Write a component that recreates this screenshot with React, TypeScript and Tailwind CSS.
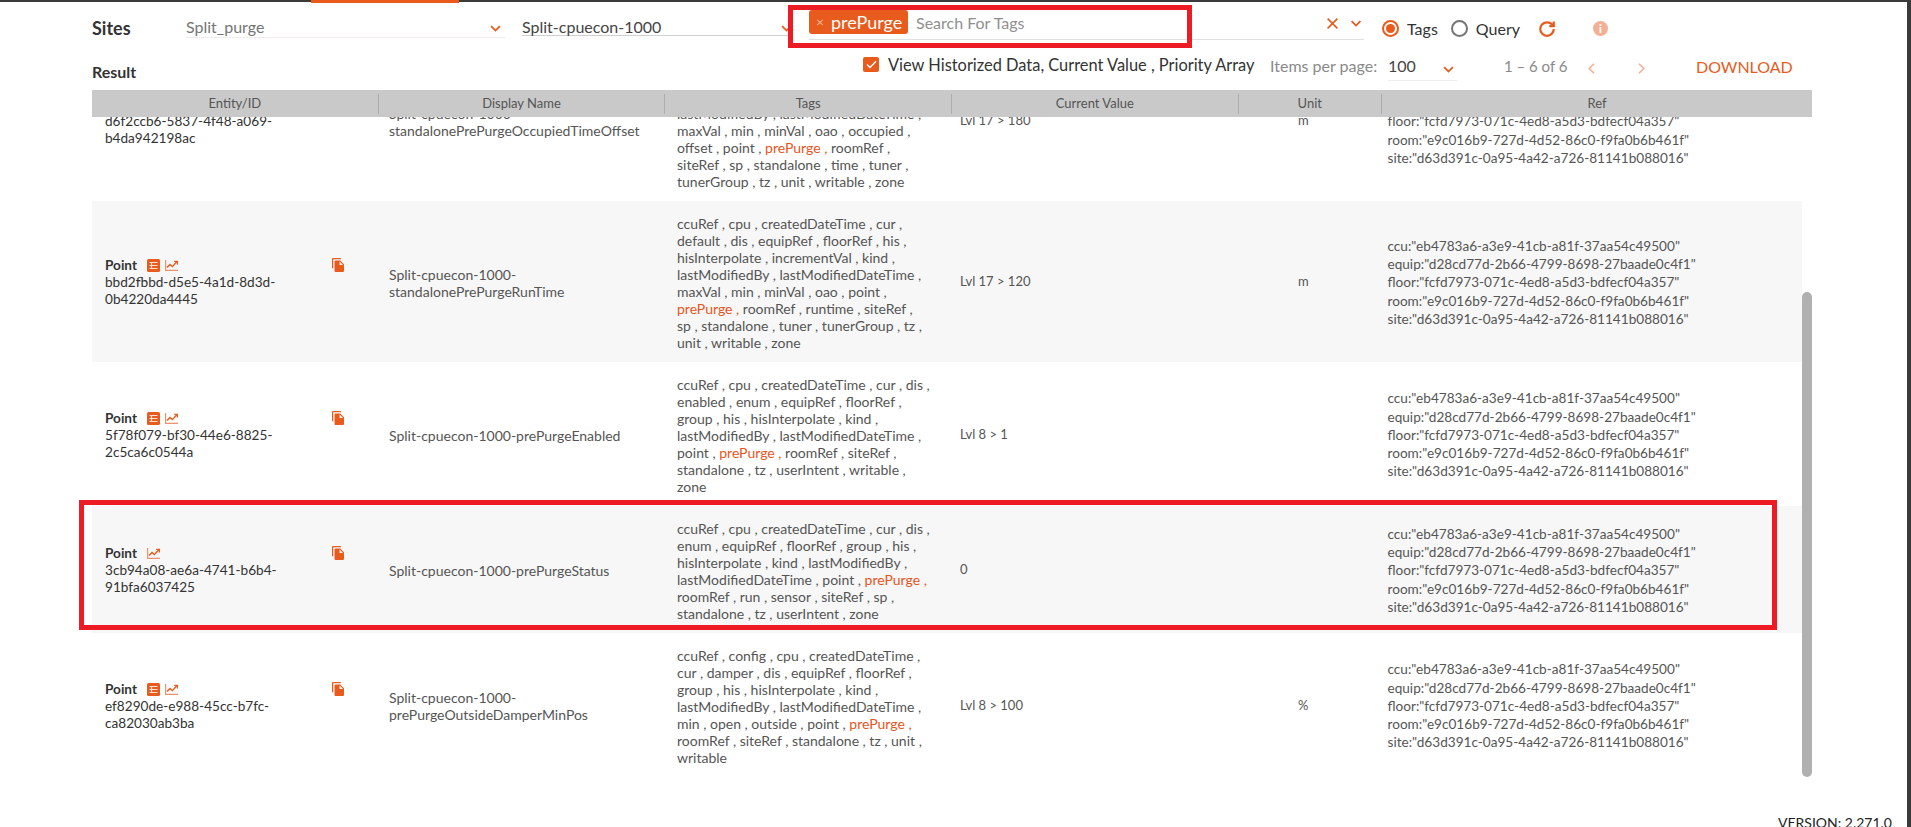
import { ReactNode } from 'react'

const ORANGE = 'text-[#e85b1c]'

function Chevron({ className }: { className: string }) {
  return (
    <svg viewBox="0 0 12 8" className={className} fill="none" stroke="currentColor" strokeWidth="2">
      <path d="M1 1.2 6 6.4 11 1.2" />
    </svg>
  )
}

function TableIcon() {
  return (
    <svg viewBox="0 0 13 13" className="w-[13px] h-[13px] shrink-0">
      <rect width="13" height="13" rx="1.5" fill="#e85b1c" />
      <path d="M2.5 3.5h8M2.5 6.5h8M2.5 9.5h8M4.5 3v7" stroke="#fde3d6" strokeWidth="1.2" />
    </svg>
  )
}

function ChartIcon() {
  return (
    <svg viewBox="0 0 13 11" className="w-[13px] h-[11px] shrink-0" fill="none">
      <path d="M.6 0v10.4H13" stroke="#f0906a" strokeWidth="1.2" />
      <path d="M2 7.6 5 4.4l2.4 2.2L11.6 2" stroke="#e85b1c" strokeWidth="1.4" />
      <path d="M9.2 1.4h3.2v3.2" stroke="#e85b1c" strokeWidth="1.2" />
    </svg>
  )
}

function CopyIcon() {
  return (
    <svg viewBox="2 1 19 22" className="w-[12px] h-[14px]" fill="#e85b1c">
      <path d="M16 1H4c-1.1 0-2 .9-2 2v14h2V3h12V1zm-1 4l6 6v10c0 1.1-.9 2-2 2H7.99C6.89 23 6 22.1 6 21l.01-14c0-1.1.89-2 1.99-2h7zm-1 7h5.5L14 6.5V12z" />
    </svg>
  )
}

function TagLine({ text }: { text: string }) {
  const parts = text.split('prePurge ,')
  if (parts.length === 1) return <div>{text}</div>
  return (
    <div>
      {parts[0]}
      <span className="text-[#e8541c]">prePurge ,</span>
      {parts[1]}
    </div>
  )
}

const refs = [
  'ccu:"eb4783a6-a3e9-41cb-a81f-37aa54c49500"',
  'equip:"d28cd77d-2b66-4799-8698-27baade0c4f1"',
  'floor:"fcfd7973-071c-4ed8-a5d3-bdfecf04a357"',
  'room:"e9c016b9-727d-4d52-86c0-f9fa0b6b461f"',
  'site:"d63d391c-0a95-4a42-a726-81141b088016"',
]

interface Row {
  table: boolean
  id: string[]
  name: string[]
  tags: string[]
  value: string
  unit: string
}

const rows: Row[] = [
  {
    table: true,
    id: ['d6f2ccb6-5837-4f48-a069-', 'b4da942198ac'],
    name: ['Split-cpuecon-1000-', 'standalonePrePurgeOccupiedTimeOffset'],
    tags: [
      'ccuRef , cpu , createdDateTime , cur ,',
      'default , dis , equipRef , floorRef , his ,',
      'hisInterpolate , incrementVal , kind ,',
      'lastModifiedBy , lastModifiedDateTime ,',
      'maxVal , min , minVal , oao , occupied ,',
      'offset , point , prePurge , roomRef ,',
      'siteRef , sp , standalone , time , tuner ,',
      'tunerGroup , tz , unit , writable , zone',
    ],
    value: 'Lvl 17 > 180',
    unit: 'm',
  },
  {
    table: true,
    id: ['bbd2fbbd-d5e5-4a1d-8d3d-', '0b4220da4445'],
    name: ['Split-cpuecon-1000-', 'standalonePrePurgeRunTime'],
    tags: [
      'ccuRef , cpu , createdDateTime , cur ,',
      'default , dis , equipRef , floorRef , his ,',
      'hisInterpolate , incrementVal , kind ,',
      'lastModifiedBy , lastModifiedDateTime ,',
      'maxVal , min , minVal , oao , point ,',
      'prePurge , roomRef , runtime , siteRef ,',
      'sp , standalone , tuner , tunerGroup , tz ,',
      'unit , writable , zone',
    ],
    value: 'Lvl 17 > 120',
    unit: 'm',
  },
  {
    table: true,
    id: ['5f78f079-bf30-44e6-8825-', '2c5ca6c0544a'],
    name: ['Split-cpuecon-1000-prePurgeEnabled'],
    tags: [
      'ccuRef , cpu , createdDateTime , cur , dis ,',
      'enabled , enum , equipRef , floorRef ,',
      'group , his , hisInterpolate , kind ,',
      'lastModifiedBy , lastModifiedDateTime ,',
      'point , prePurge , roomRef , siteRef ,',
      'standalone , tz , userIntent , writable ,',
      'zone',
    ],
    value: 'Lvl 8 > 1',
    unit: '',
  },
  {
    table: false,
    id: ['3cb94a08-ae6a-4741-b6b4-', '91bfa6037425'],
    name: ['Split-cpuecon-1000-prePurgeStatus'],
    tags: [
      'ccuRef , cpu , createdDateTime , cur , dis ,',
      'enum , equipRef , floorRef , group , his ,',
      'hisInterpolate , kind , lastModifiedBy ,',
      'lastModifiedDateTime , point , prePurge ,',
      'roomRef , run , sensor , siteRef , sp ,',
      'standalone , tz , userIntent , zone',
    ],
    value: '0',
    unit: '',
  },
  {
    table: true,
    id: ['ef8290de-e988-45cc-b7fc-', 'ca82030ab3ba'],
    name: ['Split-cpuecon-1000-', 'prePurgeOutsideDamperMinPos'],
    tags: [
      'ccuRef , config , cpu , createdDateTime ,',
      'cur , damper , dis , equipRef , floorRef ,',
      'group , his , hisInterpolate , kind ,',
      'lastModifiedBy , lastModifiedDateTime ,',
      'min , open , outside , point , prePurge ,',
      'roomRef , siteRef , standalone , tz , unit ,',
      'writable',
    ],
    value: 'Lvl 8 > 100',
    unit: '%',
  },
]

function HeaderCell({ children, last }: { children: ReactNode; last?: boolean }) {
  return (
    <div className={`flex items-center justify-center h-[20px] ${last ? '' : 'border-r border-[#adadad]'}`}>
      {children}
    </div>
  )
}

export default function App() {
  return (
    <div className="relative w-[1911px] h-[827px] overflow-hidden bg-white font-['Lato',sans-serif]">
      {/* top nav edge */}
      <div className="h-[2px] bg-[#3a3a3a]">
        <div className="ml-[311px] w-[148px] h-[3px] bg-[#e85b1c]" />
      </div>

      {/* filters */}
      <div className="flex h-[46px] pl-[92px] items-start">
        <div className="w-[94px] pt-[15px] text-[18px] leading-[22px] font-bold text-[#333]">Sites</div>
        <div className="w-[319px] h-[36px] flex items-end justify-between pr-[4px] pb-[2px] border-b border-[#f0ecec]">
          <span className="text-[16px] leading-[16px] text-[#757575]">Split_purge</span>
          <Chevron className={`w-[11px] h-[7px] mb-[3px] ${ORANGE}`} />
        </div>
        <div className="ml-[17px] w-[270px] h-[34px] flex items-end justify-between border-b border-[#cfcfcf]">
          <span className="text-[16px] leading-[16px] text-[#444]">Split-cpuecon-1000</span>
          <Chevron className={`w-[11px] h-[7px] mb-[3px] ${ORANGE}`} />
        </div>
        <div className="ml-[17px] w-[555px] h-[38px] flex items-start border-b border-[#e0e0e0] pt-[8px]">
          <div className="flex items-center h-[24px] w-[99px] rounded-[3px] bg-[#e85b1c] pl-[7px] text-white">
            <span className="w-[15px] text-[14px] leading-none text-[#f5b79c]">×</span>
            <span className="text-[18px] leading-[24px]">prePurge</span>
          </div>
          <span className="ml-[8px] text-[16px] leading-[26px] text-[#8f8f8f]">Search For Tags</span>
          <svg viewBox="0 0 11 11" className={`ml-auto mt-[8px] w-[11px] h-[11px] ${ORANGE}`} fill="none" stroke="currentColor" strokeWidth="1.6">
            <path d="M.6.6l9.8 9.8M10.4.6.6 10.4" />
          </svg>
          <Chevron className={`ml-[12px] mr-[2px] mt-[10px] w-[12px] h-[7px] ${ORANGE}`} />
        </div>
        <div className="ml-[18px] flex items-center h-[17px] mt-[18px] text-[16px] text-[#333]">
          <span className="w-[17px] h-[17px] rounded-full border-2 border-[#e85b1c] flex items-center justify-center">
            <span className="w-[9px] h-[9px] rounded-full bg-[#e85b1c]" />
          </span>
          <span className="ml-[8px]">Tags</span>
          <span className="ml-[13px] w-[17px] h-[17px] rounded-full border-2 border-[#757575]" />
          <span className="ml-[8px]">Query</span>
          <svg viewBox="0 0 24 24" className={`ml-[18px] w-[18px] h-[18px] ${ORANGE}`} fill="none" stroke="currentColor" strokeWidth="3">
            <path d="M21 12a9 9 0 1 1-9-9c2.52 0 4.93 1 6.74 2.74L21 8" />
            <path d="M21 2v6h-6" />
          </svg>
          <span className="ml-[37px] w-[15px] h-[15px] rounded-full bg-[#f4b094] flex items-center justify-center text-white text-[11px] font-black leading-none">i</span>
        </div>
      </div>

      <div className="flex h-[42px] pl-[92px] items-start">
        <div className="w-[771px] pt-[14px] text-[16px] leading-[20px] font-bold text-[#333]">Result</div>
        <div className="mt-[9px] w-[16px] h-[15px] rounded-[2px] bg-[#e85b1c] flex items-center justify-center">
          <svg viewBox="0 0 12 10" className="w-[11px] h-[9px]" fill="none" stroke="white" strokeWidth="1.6">
            <path d="M1 5l3.4 3.4L11 1.4" />
          </svg>
        </div>
        <span className="ml-[9px] mt-[7px] w-[382px] text-[16.4px] leading-[20px] whitespace-nowrap text-[#333]">View Historized Data, Current Value , Priority Array</span>
        <span className="mt-[8px] w-[118px] text-[16px] leading-[20px] whitespace-nowrap text-[#8a8a8a]">Items per page:</span>
        <div className="w-[69px] h-[33px] flex justify-between pt-[8px] pr-[3px] border-b border-[#eeeeee]">
          <span className="text-[16px] leading-[20px] text-[#444]">100</span>
          <Chevron className={`mt-[10px] w-[11px] h-[7px] ${ORANGE}`} />
        </div>
        <span className="ml-[47px] mt-[8px] w-[84px] text-[15px] leading-[20px] text-[#8a8a8a]">1 – 6 of 6</span>
        <svg viewBox="0 0 7 11" className="mt-[15px] w-[7px] h-[11px] text-[#f4b094]" fill="none" stroke="currentColor" strokeWidth="1.6">
          <path d="M6 .8 1.2 5.5 6 10.2" />
        </svg>
        <svg viewBox="0 0 7 11" className="ml-[43px] mt-[15px] w-[7px] h-[11px] text-[#f4b094]" fill="none" stroke="currentColor" strokeWidth="1.6">
          <path d="M1 .8 5.8 5.5 1 10.2" />
        </svg>
        <span className={`ml-[51px] mt-[9px] text-[16px] leading-[20px] ${ORANGE}`}>DOWNLOAD</span>
      </div>

      {/* table */}
      <div className="ml-[92px] w-[1720px]">
        <div className="grid grid-cols-12 items-center h-[27px] bg-[#c9c9c9] text-[13px] text-[#555]">
          <div className="col-span-2"><HeaderCell>Entity/ID</HeaderCell></div>
          <div className="col-span-2"><HeaderCell>Display Name</HeaderCell></div>
          <div className="col-span-2"><HeaderCell>Tags</HeaderCell></div>
          <div className="col-span-2"><HeaderCell>Current Value</HeaderCell></div>
          <div className="col-span-1"><HeaderCell>Unit</HeaderCell></div>
          <div className="col-span-3"><HeaderCell last>Ref</HeaderCell></div>
        </div>
        <div className="relative h-[660px] overflow-hidden">
          <div className="w-[1710px] -mt-[77px]">
            {rows.map((r, i) => (
              <div
                key={r.id[0]}
                className={`grid grid-cols-12 items-center text-[14px] leading-[17px] text-[#555] ${i % 2 === 1 ? 'bg-[#f7f7f7]' : 'bg-white'}`}
              >
                <div className="col-span-2 flex items-start pl-[13px] pr-[14px] pt-[2px] text-[13.6px] text-[#333]">
                  <div className="flex-1">
                    <div className="flex items-center gap-[5px] h-[17px]">
                      <span className="font-bold w-[37px]">Point</span>
                      {r.table && <TableIcon />}
                      <ChartIcon />
                    </div>
                    {r.id.map((l) => (
                      <div key={l}>{l}</div>
                    ))}
                  </div>
                  <div className="mt-[1px] mr-[19px]"><CopyIcon /></div>
                </div>
                <div className="col-span-2 pl-[12px] pt-[2px]">
                  {r.name.map((l) => (
                    <div key={l}>{l}</div>
                  ))}
                </div>
                <div className="col-span-2 pl-[15px] pt-[14px] pb-[11px] whitespace-nowrap">
                  {r.tags.map((l, j) => (
                    <TagLine key={j} text={l} />
                  ))}
                </div>
                <div className="col-span-2 pl-[13px] text-[13px]">{r.value}</div>
                <div className="col-span-1 text-center text-[13px]">{r.unit}</div>
                <div className="col-span-3 pl-[13px] pt-[2px] text-[13.6px] leading-[18.2px]">
                  {refs.map((l) => (
                    <div key={l}>{l}</div>
                  ))}
                </div>
              </div>
            ))}
          </div>
          {/* scrollbar thumb */}
          <div className="absolute right-0 top-[175px] w-[10px] h-[485px] rounded-[5px] bg-[#b0b0b0]" />
        </div>
      </div>

      <div className="flex justify-end pr-[19px] pt-[37px] text-[14px] leading-[18px] text-[#222]">VERSION: 2.271.0</div>

      {/* window edge */}
      <div className="absolute right-0 top-0 bottom-0 w-[4px] bg-[#3a3a3a]" />

      {/* review markers */}
      <div className="absolute left-[788px] top-[5px] w-[404px] h-[43px] border-[5px] border-[#ed1c24]" />
      <div className="absolute left-[79px] top-[500px] w-[1698px] h-[130px] border-[5px] border-[#ed1c24]" />
    </div>
  )
}
